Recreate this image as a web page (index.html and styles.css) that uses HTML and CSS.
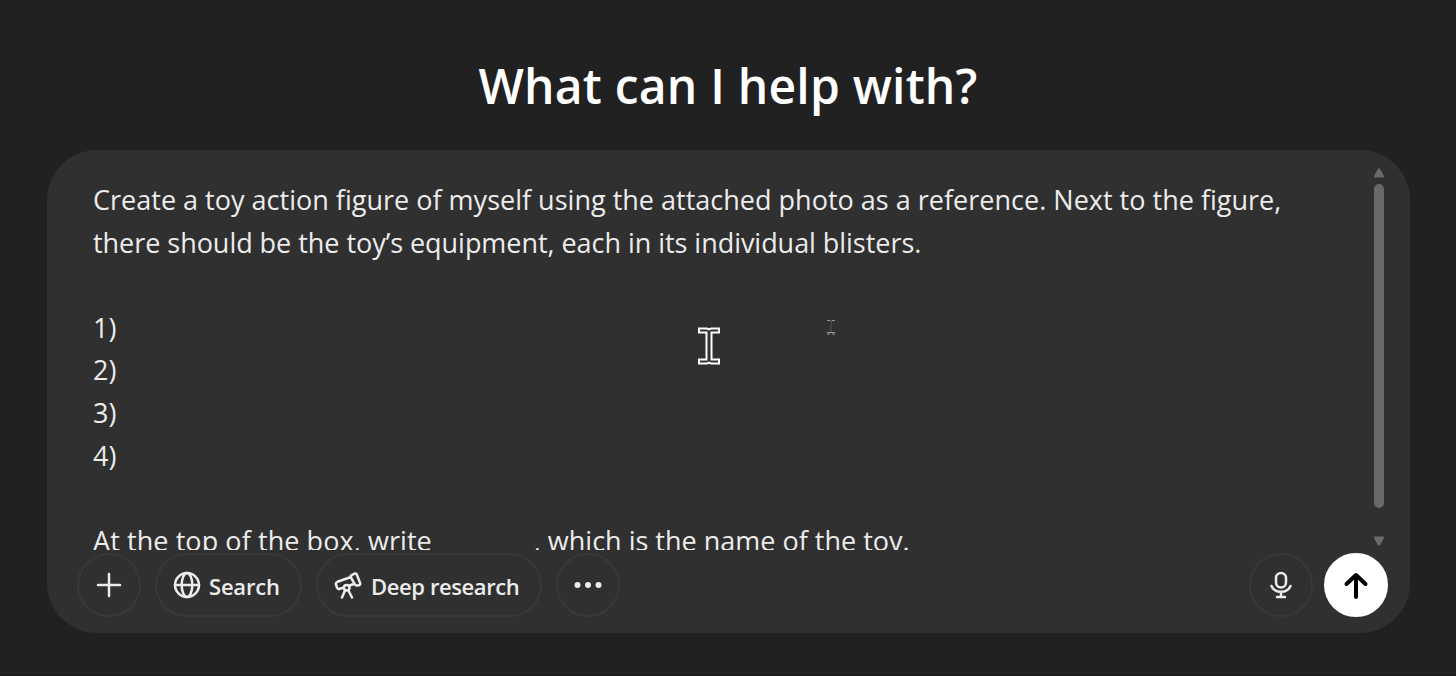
FILE: index.html
```html
<!DOCTYPE html>
<html lang="en">
<head>
	<meta charset="utf-8">
	<title>What can I help with?</title>
	<link rel="stylesheet" href="styles.css">
</head>
<body>
	<main class="page">
		<h1>What can I help with?</h1>
		<div class="composer">
			<div class="prompt-area">
				<div class="prompt">
					<p class="line1">Create a toy action figure of myself using the attached photo as a reference. Next to the figure,</p>
					<p class="line2">there should be the toy’s equipment, each in its individual blisters.</p>
					<p></p>
					<p>1)</p>
					<p>2)</p>
					<p>3)</p>
					<p>4)</p>
					<p></p>
					<p class="line3"><span class="write">At the top of the box, write</span><span class="blank"></span>, which is the name of the toy.</p>
				</div>
				<div class="scrollbar">
					<svg class="arrow" width="12" height="10" viewBox="0 0 12 10"><path d="M5 .5h2L11 8v1.500H1V8z" /></svg>
					<div class="thumb"></div>
					<svg class="arrow down" width="12" height="10" viewBox="0 0 12 10"><path d="M1 .5h10V2L7 9.500H5L1 2z" /></svg>
				</div>
			</div>
			<div class="toolbar">
				<button class="btn round" aria-label="Add">
					<svg width="26" height="26" viewBox="0 0 26 26"><path d="M13 2v22M2 13h22" /></svg>
				</button>
				<button class="btn search">
					<svg width="28" height="28" viewBox="0 0 28 28"><circle cx="14" cy="14" r="12" /><ellipse cx="14" cy="14" rx="5.300" ry="12" /><path d="M2 14h24" /></svg>
					<span class="label-search">Search</span>
				</button>
				<button class="btn research">
					<svg width="28" height="28" viewBox="0 0 28 28"><path d="M17 6 3.500 10.800c-1.300.5-1.900 1.500-1.500 2.700l1 3c.4 1.300 1.500 1.700 2.800 1.300l3.700-1.200M15.500 14.500l5-1.700M17.300 4.300l2.700-1.500c1.200-.7 2.400-.3 2.900 1l3.200 8.200c.4 1.200 0 2-1.200 2.200l-2 .3c-1 .1-1.700-.3-2.100-1.200l-4-7.200c-.4-.8-.3-1.400.5-1.800zM8 26.500l3.200-7.500M18 26.500 14.200 19" /><circle cx="12.700" cy="16.800" r="2.800" /></svg>
					<span class="label-research">Deep research</span>
				</button>
				<button class="btn round" aria-label="More">
					<svg class="dots" width="30" height="8" viewBox="0 0 30 8"><circle cx="4.500" cy="4" r="3" /><circle cx="15" cy="4" r="3" /><circle cx="25.500" cy="4" r="3" /></svg>
				</button>
				<button class="btn round mic" aria-label="Dictate">
					<svg width="24" height="30" viewBox="0 0 24 30"><rect x="7" y="3" width="10" height="14.500" rx="5" /><path d="M2.500 16c1.500 3.800 5 5.800 9.500 5.800s8-2 9.500-5.800M12 22v4.500M8 27h8" /></svg>
				</button>
				<button class="btn round send" aria-label="Send">
					<svg width="26" height="28" viewBox="0 0 26 28"><path d="M13 26V4M3.500 13 13 4l9.500 9" /></svg>
				</button>
			</div>
			<svg class="cursor" width="24" height="40" viewBox="0 0 24 40"><path d="M2 2.500h8l2 1 2-1h8v4h-7.500v27H22v4h-8l-2-1-2 1H2v-4h7.500v-27H2z" /></svg>
			<svg class="cursor-small" width="10" height="18" viewBox="0 0 10 18"><path d="M1 2.500h3l1 1 1-1h3M1 14.500h8M1 16h3M6 16h3" /><path class="stem" d="M5 4v10" /></svg>
		</div>
	</main>
</body>
</html>
```

FILE: styles.css
```css
body {
	background-color: #212121;
	color: #ececec;
	font-family: "Open Sans", "Noto Sans", sans-serif;
	margin: 0;
	overflow: hidden;
}

.page {
	border-bottom: 1px solid #19171a;
	box-sizing: border-box;
	height: 676px;
	padding: 0 46px 0 47px;
}

h1 {
	color: #fff;
	font-size: 48px;
	font-weight: 600;
	letter-spacing: 0.22px;
	line-height: 72px;
	margin: 0;
	padding: 50px 1px 28px 0;
	text-align: center;
	white-space: nowrap;
}

.composer {
	background-color: #303030;
	border-radius: 50px;
	box-sizing: border-box;
	height: 483px;
	padding: 16px 22px 16px 30px;
	position: relative;
}

.prompt-area {
	display: flex;
	height: 384px;
	justify-content: space-between;
}

.prompt {
	font-size: 27px;
	line-height: 42.6px;
	overflow: hidden;
	padding: 13px 0 0 16px;
	white-space: nowrap;
}

.prompt p {
	height: 42.6px;
	margin: 0;
}

.prompt .line1 {
	letter-spacing: 0.01px;
}

.prompt .line2 {
	letter-spacing: -0.04px;
}

.write {
	letter-spacing: 0.08px;
}

.blank {
	display: inline-block;
	width: 102px;
}

.scrollbar {
	align-items: center;
	display: flex;
	flex-direction: column;
	width: 18px;
}

.arrow {
	fill: #696969;
	margin: 2px 0 6px;
}

.thumb {
	background-color: #696969;
	border-radius: 5px;
	height: 324px;
	width: 10px;
}

.arrow.down {
	margin: 28px 0 0;
}

.toolbar {
	align-items: center;
	display: flex;
	gap: 14px;
	margin-top: 3px;
}

.btn {
	align-items: center;
	background: none;
	border: 2px solid #393939;
	border-radius: 32px;
	box-sizing: border-box;
	color: #ececec;
	display: flex;
	font-family: inherit;
	font-size: 22px;
	font-weight: 600;
	height: 64px;
	justify-content: flex-start;
	padding: 0 0 0 16px;
	white-space: nowrap;
}

.btn svg {
	fill: none;
	flex-shrink: 0;
	stroke: #ececec;
	stroke-linecap: round;
	stroke-linejoin: round;
	stroke-width: 2.5;
}

.btn.round {
	justify-content: center;
	padding: 0;
	width: 64px;
}

.search {
	gap: 8px;
	width: 147px;
}

.research {
	gap: 9px;
	width: 226px;
}

.label-search,
.label-research {
	padding-top: 2px;
}

.label-search {
	letter-spacing: -0.2px;
}

.label-research {
	letter-spacing: -0.4px;
}

.btn .dots {
	fill: #ececec;
	stroke: none;
}

.mic {
	margin-left: auto;
}

.send {
	background-color: #fff;
	border-color: #fff;
	margin-left: -3px;
}

.btn.send svg {
	stroke: #000;
	stroke-width: 4;
}

/* mouse pointers over the text */
.cursor,
.cursor-small {
	fill: none;
	position: absolute;
}

.cursor {
	left: 650px;
	stroke: #fff;
	stroke-width: 2;
	top: 176px;
}

.cursor-small {
	left: 779px;
	stroke: #999;
	top: 168px;
}

.stem {
	stroke: #555;
}
```
